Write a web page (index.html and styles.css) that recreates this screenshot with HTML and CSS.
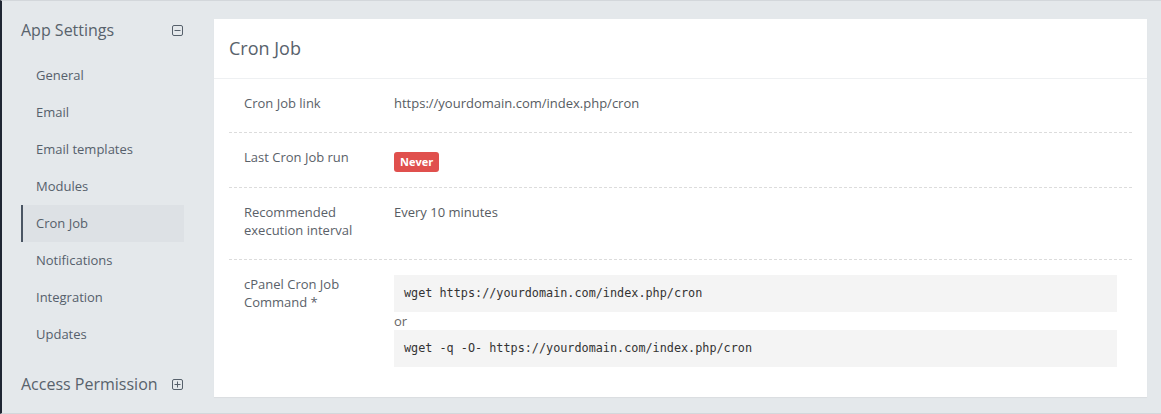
FILE: index.html
```html
<!DOCTYPE html>
<html>
<head>
<meta charset="utf-8">
<link rel="stylesheet" href="styles.css">
</head>
<body>
<div class="page">
  <aside class="sidebar">
    <div class="group-head">
      <span>App Settings</span>
      <svg class="toggle" width="11" height="11" viewBox="0 0 11 11"><rect x="0.5" y="0.5" width="10" height="10" rx="1.5" fill="none" stroke="#56606b" stroke-width="1"/><line x1="2.5" y1="5.5" x2="8.5" y2="5.5" stroke="#56606b" stroke-width="1"/></svg>
    </div>
    <ul class="menu">
      <li>General</li>
      <li>Email</li>
      <li>Email templates</li>
      <li>Modules</li>
      <li class="active">Cron Job</li>
      <li>Notifications</li>
      <li>Integration</li>
      <li>Updates</li>
    </ul>
    <div class="group-head second">
      <span>Access Permission</span>
      <svg class="toggle" width="11" height="11" viewBox="0 0 11 11"><rect x="0.5" y="0.5" width="10" height="10" rx="1.5" fill="none" stroke="#56606b" stroke-width="1"/><line x1="2.5" y1="5.5" x2="8.5" y2="5.5" stroke="#56606b" stroke-width="1"/><line x1="5.5" y1="2.5" x2="5.5" y2="8.5" stroke="#56606b" stroke-width="1"/></svg>
    </div>
  </aside>
  <main class="main">
    <section class="card">
      <div class="card-head">Cron Job</div>
      <div class="card-body">
        <div class="row">
          <div class="label">Cron Job link</div>
          <div class="value">https://yourdomain.com/index.php/cron</div>
        </div>
        <div class="row">
          <div class="label">Last Cron Job run</div>
          <div class="value"><span class="badge">Never</span></div>
        </div>
        <div class="row">
          <div class="label">Recommended execution interval</div>
          <div class="value">Every 10 minutes</div>
        </div>
        <div class="row last">
          <div class="label">cPanel Cron Job Command *</div>
          <div class="value">
            <div class="code">wget https://yourdomain.com/index.php/cron</div>
            <div class="or">or</div>
            <div class="code">wget -q -O- https://yourdomain.com/index.php/cron</div>
          </div>
        </div>
      </div>
    </section>
  </main>
</div>
</body>
</html>
```
FILE: styles.css
```css
* { box-sizing: border-box; }
html, body { margin: 0; padding: 0; }
body {
  background: #e4e8eb;
  font-family: "Open Sans", "Liberation Sans", sans-serif;
  font-size: 13px;
  color: #565d65;
  height: 414px;
  overflow: hidden;
}
.page {
  display: flex;
  height: 414px;
  border-left: 2px solid #1f2633;
  border-top: 1px solid #d3d7db;
  border-bottom: 1px solid #d3d7db;
}
.sidebar {
  width: 198px;
  padding: 6px 0 0 19px;
  flex: none;
}
.group-head {
  width: 163px;
  height: 46px;
  display: flex;
  align-items: center;
  justify-content: space-between;
  padding-right: 1px;
  font-size: 16px;
  color: #58626c;
}
.group-head.second { margin-top: 8px; }
.toggle { display: block; }
.menu {
  list-style: none;
  margin: 4px 0 0 0;
  padding: 0;
  width: 163px;
}
.menu li {
  height: 37px;
  line-height: 37px;
  padding-left: 15px;
  color: #56606b;
}
.menu li.active {
  background: #dde1e5;
  border-left: 2px solid #4a5563;
  padding-left: 13px;
}
.main {
  flex: 1;
  padding: 18px 14px 0 14px;
}
.card {
  background: #fff;
  height: 378px;
  box-shadow: 0 1px 1px rgba(0,0,0,0.04);
}
.card-head {
  height: 60px;
  line-height: 58px;
  padding-left: 15px;
  font-size: 18px;
  color: #58626c;
  border-bottom: 1px solid #eef0f2;
}
.card-body { padding: 0 15px; }
.row {
  display: grid;
  grid-template-columns: 150px 1fr;
  padding: 15px 15px 20px 15px;
  border-bottom: 1px dashed #dcdcdc;
  line-height: 18px;
}
.row.last { border-bottom: none; }
.label { color: #5a6169; padding-right: 20px; }
.value { color: #575c62; }
.badge {
  display: inline-block;
  vertical-align: top;
  margin-top: 4px;
  margin-bottom: -5px;
  height: 20px;
  line-height: 20px;
  padding: 0 6px;
  background: #e0504d;
  color: #fff;
  font-weight: 700;
  font-size: 11px;
  border-radius: 3px;
}
.code {
  background: #f4f4f4;
  height: 37px;
  line-height: 37px;
  padding-left: 10px;
  font-family: "DejaVu Sans Mono", "Liberation Mono", monospace;
  font-size: 11.8px;
  color: #333;
}
.or { height: 18px; line-height: 18px; color: #666; }
```
